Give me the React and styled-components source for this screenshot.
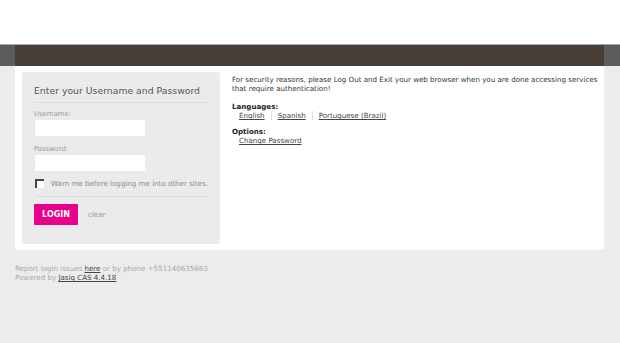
import styled, { createGlobalStyle } from "styled-components";

const Global = createGlobalStyle`
  html, body {
    margin: 0;
    padding: 0;
    background: #ececec;
    font-family: "DejaVu Sans", Verdana, sans-serif;
    font-size: 7.1px;
    color: #222;
  }
`;

const Page = styled.div`
  width: 620px;
  min-height: 343px;
  background: #ececec;
`;

const Top = styled.div`
  height: 44px;
  background: #fff;
`;

const Header = styled.div`
  height: 21px;
  background: #5c5c5c;
  border-top: 1px solid #a9a9a9;
  padding: 0 16px 0 15px;
  display: flex;
`;

const HeaderBar = styled.div`
  flex: 1;
  background: #483e37;
`;

const Content = styled.div`
  margin: 0 16px 0 15px;
  background: #fff;
  border-radius: 0 0 3px 3px;
  padding: 6px 7px 6px 7px;
  display: flex;
  gap: 12px;
`;

const LoginBox = styled.div`
  flex: none;
  width: 198px;
  height: 172px;
  box-sizing: border-box;
  background: #ebebeb;
  border-radius: 3px;
  padding: 13px 12px 0 12px;
`;

const Title = styled.h2`
  margin: 0;
  font-family: "DejaVu Sans", Verdana, sans-serif;
  font-weight: normal;
  font-size: 9.3px;
  color: #555;
  padding-bottom: 6px;
  border-bottom: 1px solid #dcdcdc;
`;

const Label = styled.div`
  color: #9a9a9a;
  font-size: 6.8px;
  margin: ${(p) => p.$top}px 0 2px 0;
`;

const Input = styled.div`
  width: 110px;
  height: 16px;
  margin-left: 1px;
  background: #fff;
  border-radius: 1px;
`;

const Check = styled.div`
  display: flex;
  align-items: center;
  gap: 7px;
  margin: 8px 0 0 1px;
  color: #8a8a8a;
  padding-bottom: 8px;
  border-bottom: 1px solid #dcdcdc;
`;

const Box = styled.span`
  width: 7px;
  height: 7px;
  background: #fff;
  border-top: 2px solid #444;
  border-left: 2px solid #444;
`;

const Actions = styled.div`
  display: flex;
  align-items: center;
  gap: 10px;
  margin-top: 7px;
`;

const LoginButton = styled.button`
  width: 44px;
  height: 21px;
  border: none;
  border-radius: 1px;
  background: #e6008b;
  color: #fff;
  font-family: "DejaVu Sans", Verdana, sans-serif;
  font-weight: bold;
  font-size: 8px;
  padding: 0;
`;

const Clear = styled.span`
  color: #999;
`;

const Side = styled.div`
  flex: 1;
  padding-top: 3px;
  line-height: 9px;
  white-space: nowrap;
  color: #333;
`;

const Heading = styled.div`
  font-weight: bold;
  color: #222;
  margin-top: ${(p) => p.$top}px;
  line-height: 8px;
`;

const Links = styled.div`
  display: flex;
  padding-left: 7px;
`;

const LinkItem = styled.a`
  color: #444;
  text-decoration: underline;
  padding-right: 6px;
  margin-right: 6px;
  border-right: ${(p) => (p.$last ? "none" : "1px solid #ddd")};
`;

const Footer = styled.div`
  padding: 14px 15px;
  color: #aaa;
  line-height: 9px;
  a {
    color: #444;
    text-decoration: underline;
  }
`;

export default function App() {
  return (
    <Page>
      <Global />
      <Top />
      <Header>
        <HeaderBar />
      </Header>
      <Content>
        <LoginBox>
          <Title>Enter your Username and Password</Title>
          <Label $top={7}>Username:</Label>
          <Input />
          <Label $top={9}>Password:</Label>
          <Input />
          <Check>
            <Box />
            Warn me before logging me into other sites.
          </Check>
          <Actions>
            <LoginButton>LOGIN</LoginButton>
            <Clear>clear</Clear>
          </Actions>
        </LoginBox>
        <Side>
          <div>
            For security reasons, please Log Out and Exit your web browser when you are done accessing services
            <br />
            that require authentication!
          </div>
          <Heading $top={10}>Languages:</Heading>
          <Links>
            <LinkItem>English</LinkItem>
            <LinkItem>Spanish</LinkItem>
            <LinkItem $last>Portuguese (Brazil)</LinkItem>
          </Links>
          <Heading $top={8}>Options:</Heading>
          <Links>
            <LinkItem $last>Change Password</LinkItem>
          </Links>
        </Side>
      </Content>
      <Footer>
        Report login issues <a>here</a> or by phone +551140635663
        <br />
        Powered by <a>Jasig CAS 4.4.18</a>
      </Footer>
    </Page>
  );
}
